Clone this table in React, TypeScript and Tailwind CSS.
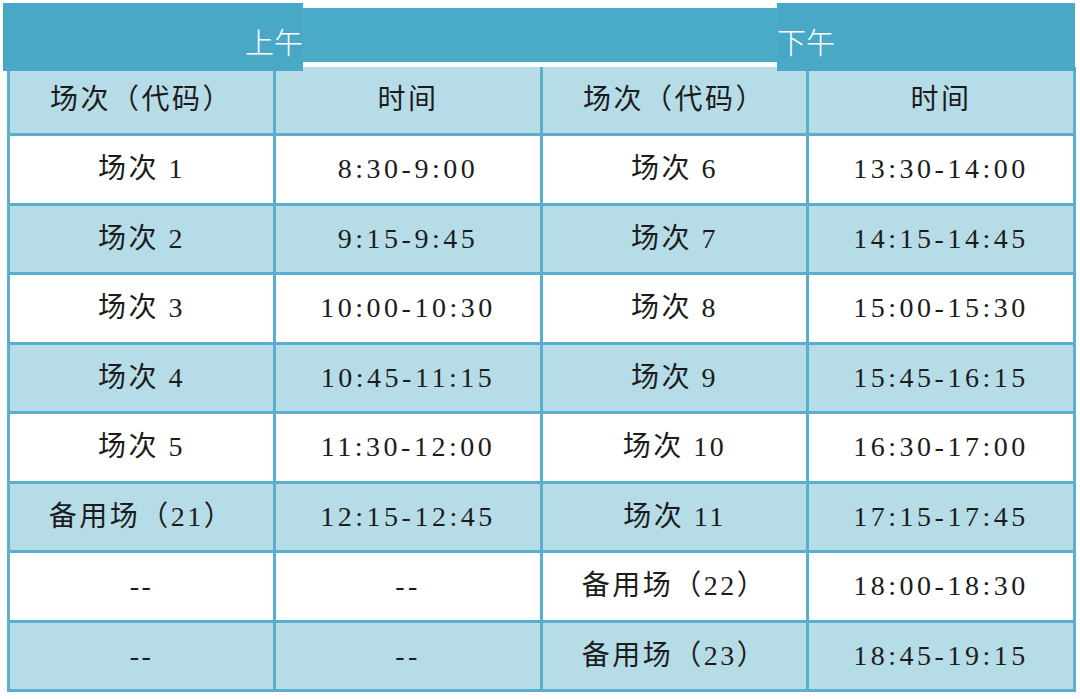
import React from "react";

const rows: string[][] = [
  ["场次 1", "8:30-9:00", "场次 6", "13:30-14:00"],
  ["场次 2", "9:15-9:45", "场次 7", "14:15-14:45"],
  ["场次 3", "10:00-10:30", "场次 8", "15:00-15:30"],
  ["场次 4", "10:45-11:15", "场次 9", "15:45-16:15"],
  ["场次 5", "11:30-12:00", "场次 10", "16:30-17:00"],
  ["备用场（21）", "12:15-12:45", "场次 11", "17:15-17:45"],
  ["--", "--", "备用场（22）", "18:00-18:30"],
  ["--", "--", "备用场（23）", "18:45-19:15"],
];

const head = ["场次（代码）", "时间", "场次（代码）", "时间"];

const font = "[font-family:'Liberation_Serif','Noto_Sans_CJK_SC',serif]";

export default function App() {
  return (
    <div className="w-[1080px] h-[699px] bg-white overflow-hidden pt-[3px]">
      <div className="relative z-10 flex ml-[3px] [font-family:'Noto_Sans_CJK_SC',sans-serif] text-white">
        <div className="w-[300px] h-[68px] bg-[#4aa8c7] flex items-center justify-end pt-[8px] text-[29px] font-light leading-none">
          上午
        </div>
        <div className="w-[474px] h-[54px] mt-[5px] bg-[#4aabc9]" />
        <div className="w-[298px] h-[68px] bg-[#4aa8c7] flex items-center justify-start pt-[8px] text-[29px] font-light leading-none">
          下午
        </div>
      </div>
      <div
        className={`-mt-[4px] ml-[7px] w-[1069px] grid grid-cols-[263px_264px_263px_264px] gap-[3px] px-[3px] pb-[3px] bg-[#5aafcf] text-[28px] text-[#1c1c1c] ${font}`}
      >
        {head.map((h, i) => (
          <div
            key={"h" + i}
            className="h-[66px] bg-[#b6dce8] flex items-center justify-center tracking-[2.5px]"
          >
            {h}
          </div>
        ))}
        {rows.map((r, ri) =>
          r.map((c, ci) => (
            <div
              key={ri + "-" + ci}
              className={`h-[66.5px] flex items-center justify-center ${
                ci % 2 === 1 ? "tracking-[3.5px]" : "tracking-[2.5px]"
              } ${ri % 2 === 0 ? "bg-white" : "bg-[#b6dce8]"}`}
            >
              {c}
            </div>
          ))
        )}
      </div>
    </div>
  );
}
